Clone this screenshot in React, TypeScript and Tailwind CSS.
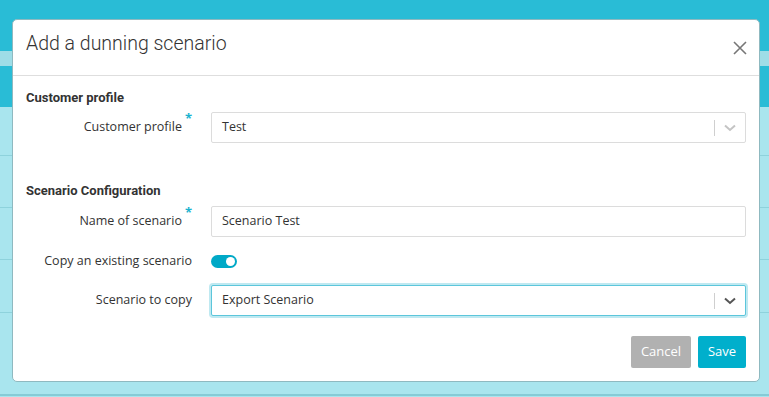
import React from 'react';

// Background page stripes behind the modal overlay
const Stripe = ({ h, className }: { h: string; className: string }) => <div className={`${h} ${className}`} />;

const Chevron = ({ dark }: { dark?: boolean }) => (
    <svg width="12" height="8" viewBox="0 0 12 8" fill="none">
        <path d="M1 1.5 L6 6 L11 1.5" stroke={dark ? '#555' : '#c4c4c4'} strokeWidth="2" />
    </svg>
);

const SelectBox = ({ value, focused }: { value: string; focused?: boolean }) => (
    <div
        className={`flex items-center h-[31px] bg-white rounded-[2px] border ${
            focused ? 'border-[#5cc6db] shadow-[0_0_0_2px_#bfe9f1]' : 'border-[#dcdcdc]'
        }`}
    >
        <span className="flex-1 pl-[10px] text-[12.5px] text-[#333]">{value}</span>
        <span className="w-px h-[16px] bg-[#cfcfcf]" />
        <span className="w-[30px] flex justify-center">
            <Chevron dark={focused} />
        </span>
    </div>
);

const Label = ({ text, required }: { text: string; required?: boolean }) => (
    <div className="w-[166px] shrink-0 flex justify-end text-[12.5px] text-[#333]">
        <span>{text}</span>
        {required && <span className="text-[#1bb3cf] text-[13px] leading-none ml-[3px] -mt-[6px] font-bold">*</span>}
    </div>
);

const Row = ({ label, required, children, className }: { label: string; required?: boolean; children: React.ReactNode; className?: string }) => (
    <div className={`flex items-center gap-[19px] ${className ?? ''}`}>
        <Label text={label} required={required} />
        <div className="flex-1">{children}</div>
    </div>
);

export default function App() {
    return (
        <div className="relative w-[769px] h-[397px] overflow-hidden bg-[#a9e5ee]" style={{ fontFamily: '"Open Sans", sans-serif' }}>
            <div className="flex flex-col">
                <Stripe h="h-[51px]" className="bg-[#29bcd6]" />
                <Stripe h="h-[15px]" className="bg-[#9edde7]" />
                <Stripe h="h-[41px]" className="bg-[#29bcd6]" />
                <Stripe h="h-[49px]" className="border-b border-[#8ed2dc]" />
                <Stripe h="h-[52px]" className="border-b border-[#8ed2dc]" />
                <Stripe h="h-[52px]" className="border-b border-[#8ed2dc]" />
                <Stripe h="h-[53px]" className="border-b border-[#8ed2dc]" />
                <Stripe h="h-[83px]" className="border-b-2 border-[#86cbd6]" />
            </div>

            {/* Modal */}
            <div className="absolute left-[12px] top-[19px] w-[748px] h-[363px] bg-white rounded-[5px] border border-[#8fb9c0] flex flex-col">
                <div className="h-[56px] shrink-0 flex items-center justify-between pl-[13px] pr-[12px] border-b border-[#dedede]">
                    <h1 className="mb-[8px] text-[19.5px] font-light text-[#333]" style={{ fontFamily: 'Roboto, sans-serif' }}>
                        Add a dunning scenario
                    </h1>
                    <svg width="14" height="14" viewBox="0 0 14 14">
                        <path d="M1 1 L13 13 M13 1 L1 13" stroke="#777" strokeWidth="1.6" />
                    </svg>
                </div>

                <div className="flex flex-col px-[13px] pt-[13px]">
                    <h2 className="text-[13px] font-bold text-[#333] leading-[18px]" style={{ fontFamily: 'Roboto, sans-serif' }}>
                        Customer profile
                    </h2>
                    <Row label="Customer profile" required className="mt-[5px]">
                        <SelectBox value="Test" />
                    </Row>

                    <h2 className="mt-[39px] text-[13px] font-bold text-[#333] leading-[18px]" style={{ fontFamily: 'Roboto, sans-serif' }}>
                        Scenario Configuration
                    </h2>
                    <Row label="Name of scenario" required className="mt-[6px]">
                        <div className="h-[31px] flex items-center border border-[#dcdcdc] rounded-[2px] pl-[10px] text-[12.5px] text-[#333]">
                            Scenario Test
                        </div>
                    </Row>
                    <Row label="Copy an existing scenario" className="mt-[10px] h-[28px]">
                        <div className="w-[26px] h-[13px] rounded-full bg-[#00a9c7] flex items-center justify-end pr-[2px]">
                            <div className="w-[9px] h-[9px] rounded-full bg-white" />
                        </div>
                    </Row>
                    <Row label="Scenario to copy" className="mt-[10px]">
                        <SelectBox value="Export Scenario" focused />
                    </Row>

                    <div className="flex justify-end gap-[7px] mt-[20px]">
                        <button className="w-[60px] h-[32px] rounded-[2px] bg-[#b1b1b1] text-white text-[13px]">Cancel</button>
                        <button className="w-[48px] h-[32px] rounded-[2px] bg-[#00afcc] text-white text-[13px]">Save</button>
                    </div>
                </div>
            </div>
        </div>
    );
}
